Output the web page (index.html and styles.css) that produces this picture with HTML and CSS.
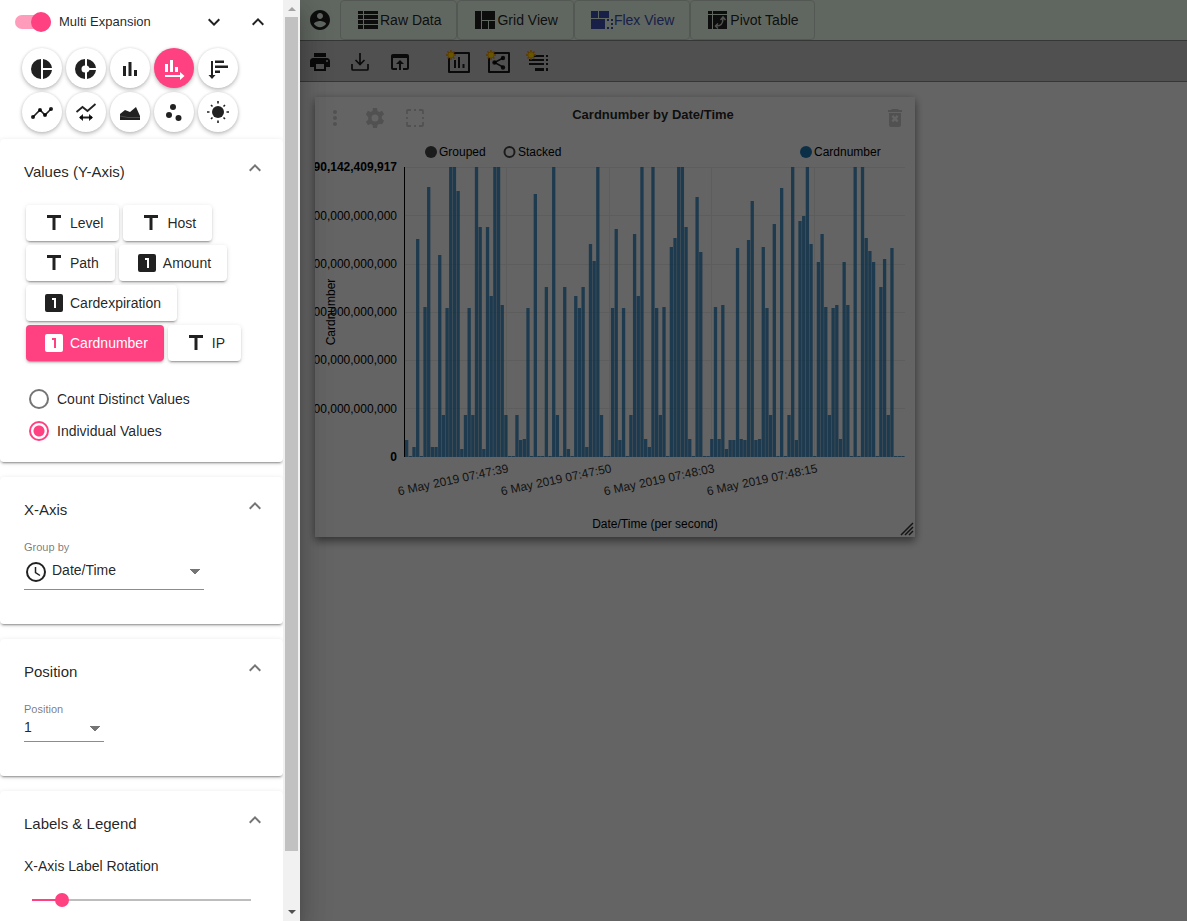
FILE: index.html
```html
<!DOCTYPE html>
<html lang="en">
<head>
<meta charset="utf-8">
<title>Flex View</title>
<link rel="stylesheet" href="styles.css">
</head>
<body>
<svg class="defs" aria-hidden="true">
  <symbol id="i-text" viewBox="0 0 24 24"><path d="M5 4v3h5.500v12h3V7H19V4z"/></symbol>
  <symbol id="i-one" viewBox="0 0 24 24"><path d="M19 3H5a2 2 0 0 0-2 2v14a2 2 0 0 0 2 2h14a2 2 0 0 0 2-2V5a2 2 0 0 0-2-2zm-5 14h-2V9h-2V7h4z"/></symbol>
  <symbol id="i-up" viewBox="0 0 24 24"><path d="M12 8l-6 6 1.410 1.410L12 10.830l4.590 4.580L18 14z"/></symbol>
  <symbol id="i-down" viewBox="0 0 24 24"><path d="M16.590 8.590L12 13.170 7.410 8.590 6 10l6 6 6-6z"/></symbol>
  <symbol id="i-spark" viewBox="0 0 10 10"><path d="M5 0v10M0 5h10M1.500 1.500l7 7M8.500 1.500l-7 7" stroke="#e08a00" stroke-width="1.400"/><circle cx="5" cy="5" r="3" fill="#ffd800" stroke="#f0a000" stroke-width=".8"/></symbol>
</svg>
<div class="layout">
  <aside class="drawer">
    <div class="drawer-content">
      <div class="topline">
        <label class="switch"><input type="checkbox" role="switch" checked><span>Multi Expansion</span></label>
        <button class="icon-btn" aria-label="Expand all"><svg class="icon"><use href="#i-down"/></svg></button>
        <button class="icon-btn" aria-label="Collapse all"><svg class="icon"><use href="#i-up"/></svg></button>
      </div>
      <div class="types">
        <button class="fab" aria-label="Pie chart"><svg class="icon" viewBox="0 0 24 24"><path d="M11 3v20a10 10 0 0 1 0-20zM13 3v9h9a10 10 0 0 0-9-9zM13 14v9a10 10 0 0 0 9-9z"/></svg></button>
        <button class="fab" aria-label="Donut chart"><svg class="icon" viewBox="0 0 24 24"><path d="M11 3v6.500a3.500 3.500 0 0 0 0 7V23a10 10 0 0 1 0-20zM13 3v6.500A3.500 3.500 0 0 1 15.500 12H22a10 10 0 0 0-9-9zM13 23v-6.500a3.500 3.500 0 0 0 2.500-2.500H22a10 10 0 0 1-9 9z"/></svg></button>
        <button class="fab" aria-label="Bar chart"><svg class="icon" viewBox="0 0 24 24"><path d="M5 10h3v10H5zM10.500 6h3v14h-3zM16 14h3v6h-3z"/></svg></button>
        <button class="fab selected" aria-label="Time bar chart"><svg class="icon" viewBox="0 0 24 24"><path d="M3 8h3v8H3zM8 4h3v12H8zM13 11h3v5h-3zM3 19h15v-3l4.500 4-4.500 4v-3H3z"/></svg></button>
        <button class="fab" aria-label="Horizontal bar chart"><svg class="icon" viewBox="0 0 24 24"><path d="M5 5h2v14h2.500L6 23l-3.500-4H5zM9 4.500h9V7H9zM9 9.500h13V12H9zM9 14.500h5V17H9z"/></svg></button>
        <button class="fab" aria-label="Line chart"><svg class="icon" viewBox="0 0 24 24"><path d="M3 17l7-7 5 5 6-6" fill="none" stroke="currentColor" stroke-width="1.600"/><circle cx="3" cy="17" r="2"/><circle cx="10" cy="10" r="2"/><circle cx="15" cy="15" r="2"/><circle cx="21" cy="9" r="2"/></svg></button>
        <button class="fab" aria-label="Time line chart"><svg class="icon" viewBox="0 0 24 24"><path d="M2.500 12l6-5 5 4 8-7M6 17.500h12" fill="none" stroke="currentColor" stroke-width="1.800"/><path d="M5 17.500l4-3.500v7zM19 17.500l-4-3.500v7z"/></svg></button>
        <button class="fab" aria-label="Area chart"><svg class="icon" viewBox="0 0 24 24"><path d="M2 20v-6l5-4 5 2 6-5 4 9v4z"/><path d="M2 16l8 1.500h12" fill="none" stroke="#666" stroke-width=".6"/></svg></button>
        <button class="fab" aria-label="Scatter chart"><svg class="icon" viewBox="0 0 24 24"><circle cx="11" cy="7" r="3"/><circle cx="7" cy="15" r="3"/><circle cx="16.500" cy="18" r="3"/></svg></button>
        <button class="fab" aria-label="Sunburst chart"><svg class="icon" viewBox="0 0 24 24"><circle cx="12" cy="12" r="6"/><path d="M12 1v2.500M12 20.500V23M1 12h2.500M20.500 12H23M5 5l1.500 1.500M17.500 17.500L19 19M19 5l-1.500 1.500M5 19l1.500-1.500" stroke="currentColor" stroke-width="1.600"/></svg></button>
      </div>

      <section class="panel">
        <header class="panel-head"><h2>Values (Y-Axis)</h2><button class="chev" aria-label="Collapse"><svg class="icon"><use href="#i-up"/></svg></button></header>
        <div class="chips">
          <button class="chip"><svg class="icon"><use href="#i-text"/></svg>Level</button>
          <button class="chip"><svg class="icon"><use href="#i-text"/></svg>Host</button>
          <button class="chip"><svg class="icon"><use href="#i-text"/></svg>Path</button>
          <button class="chip"><svg class="icon"><use href="#i-one"/></svg>Amount</button>
          <button class="chip"><svg class="icon"><use href="#i-one"/></svg>Cardexpiration</button>
          <button class="chip selected"><svg class="icon"><use href="#i-one"/></svg>Cardnumber</button>
          <button class="chip"><svg class="icon"><use href="#i-text"/></svg>IP</button>
        </div>
        <div class="radios">
          <label class="radio"><input type="radio" name="mode">Count Distinct Values</label>
          <label class="radio"><input type="radio" name="mode" checked>Individual Values</label>
        </div>
      </section>

      <section class="panel">
        <header class="panel-head"><h2>X-Axis</h2><button class="chev" aria-label="Collapse"><svg class="icon"><use href="#i-up"/></svg></button></header>
        <div class="field wide">
          <label for="group">Group by</label>
          <div class="select-row">
            <svg class="icon" viewBox="0 0 24 24"><circle cx="12" cy="12" r="9" fill="none" stroke="currentColor" stroke-width="2"/><path d="M11.500 7v5.500l4.500 3" fill="none" stroke="currentColor" stroke-width="1.500"/></svg>
            <select id="group"><option>Date/Time</option></select>
          </div>
        </div>
      </section>

      <section class="panel">
        <header class="panel-head"><h2>Position</h2><button class="chev" aria-label="Collapse"><svg class="icon"><use href="#i-up"/></svg></button></header>
        <div class="field narrow">
          <label for="pos">Position</label>
          <div class="select-row"><select id="pos"><option>1</option></select></div>
        </div>
      </section>

      <section class="panel">
        <header class="panel-head"><h2>Labels &amp; Legend</h2><button class="chev" aria-label="Collapse"><svg class="icon"><use href="#i-up"/></svg></button></header>
        <label class="slider-label" for="rot">X-Axis Label Rotation</label>
        <input class="slider" id="rot" type="range" min="0" max="100" value="11">
      </section>
    </div>
    <div class="scrollbar" aria-hidden="true"><i class="arrow up"></i><i class="thumb"></i><i class="arrow down"></i></div>
  </aside>

  <main class="app">
    <nav class="tabs">
      <button class="tool" aria-label="Account"><svg class="icon" viewBox="0 0 24 24"><path d="M12 2C6.480 2 2 6.480 2 12s4.480 10 10 10 10-4.480 10-10S17.520 2 12 2zm0 3c1.660 0 3 1.340 3 3s-1.340 3-3 3-3-1.340-3-3 1.340-3 3-3zm0 14.200c-2.500 0-4.710-1.280-6-3.220.030-1.990 4-3.080 6-3.080 1.990 0 5.970 1.090 6 3.080-1.290 1.940-3.500 3.220-6 3.220z"/></svg></button>
      <button class="tab"><svg viewBox="0 0 20 18"><path d="M0 0h5v3H0zM6 0h14v3H6zM0 4h5v4H0zM6 4h14v4H6zM0 9h5v4H0zM6 9h14v4H6zM0 14h5v4H0zM6 14h14v4H6z"/></svg>Raw Data</button>
      <button class="tab"><svg viewBox="0 0 20 18"><path d="M0 0h6v18H0zM7 0h13v9H7zM7 10h6v8H7zM14 10h6v8h-6z"/></svg>Grid View</button>
      <button class="tab active"><svg viewBox="0 0 22 18"><path d="M0 0h7v7H0zM8 0h10v7H8zM0 8h14v10H0zM16 8h2v2h-2zM20 8h2v2h-2zM20 12h2v2h-2zM16 16h2v2h-2zM20 16h2v2h-2z"/></svg>Flex View</button>
      <button class="tab"><svg viewBox="0 0 20 18"><path d="M0 0h4v3H0zM5 0h14v3H5zM0 4h4v14H0zM5 4h14v14H5z"/><path d="M8 15c5 0 7-2 7-8M12.500 9L15 6l2.500 3M10 12.500L7.500 15l2.500 2.500" fill="none" stroke="#c8d0c8" stroke-width="1.500"/></svg>Pivot Table</button>
    </nav>
    <div class="tools">
      <button class="tool" aria-label="Print"><svg class="icon" viewBox="0 0 24 24"><path d="M19 8H5c-1.660 0-3 1.340-3 3v6h4v4h12v-4h4v-6c0-1.660-1.340-3-3-3zm-3 11H8v-5h8v5zm3-7a1 1 0 1 1 0-2 1 1 0 0 1 0 2zm-1-9H6v4h12V3z"/></svg></button>
      <button class="tool" aria-label="Download"><svg class="icon" viewBox="0 0 24 24"><path d="M12 3v11M7.500 10l4.500 4.500 4.500-4.500M4 14v5a1 1 0 0 0 1 1h14a1 1 0 0 0 1-1v-5" fill="none" stroke="currentColor" stroke-width="1.700"/></svg></button>
      <button class="tool" aria-label="Open"><svg class="icon" viewBox="0 0 24 24"><path d="M19 4H5c-1.110 0-2 .9-2 2v12c0 1.100.890 2 2 2h4v-2H5V8h14v10h-4v2h4c1.100 0 2-.9 2-2V6c0-1.100-.890-2-2-2zm-7 6l-4 4h3v6h2v-6h3z"/></svg></button>
      <span class="gap"></span>
      <button class="tool" aria-label="Add chart"><svg class="icon" viewBox="0 0 24 24"><path d="M2 3h20v19H2z" fill="none" stroke="currentColor" stroke-width="2" stroke-linejoin="round"/><path d="M7 10h2v8H7zM11 7h2v11h-2zM15.500 14h2v4h-2z"/></svg><svg class="spark"><use href="#i-spark"/></svg></button>
      <button class="tool" aria-label="Add graph"><svg class="icon" viewBox="0 0 24 24"><path d="M2 3h20v19H2z" fill="none" stroke="currentColor" stroke-width="2" stroke-linejoin="round"/><path d="M16 8l-8.500 4.500L16 17" fill="none" stroke="currentColor" stroke-width="1.500"/><circle cx="16" cy="8" r="2.200"/><circle cx="7.500" cy="12.500" r="2.200"/><circle cx="16" cy="17.500" r="2.200"/></svg><svg class="spark"><use href="#i-spark"/></svg></button>
      <button class="tool" aria-label="Add list"><svg class="icon" viewBox="0 0 24 24"><path d="M5 5h12v2H5zM2 9h15v2H2zM2 13h15v2H2zM8 18h9v3H8zM19 5h2v2h-2zM19 9h2v2h-2zM19 13h2v2h-2zM19 18h2v3h-2z"/></svg><svg class="spark"><use href="#i-spark"/></svg></button>
    </div>
    <article class="card">
      <header class="card-head">
        <button class="tool" aria-label="Menu"><svg class="icon" viewBox="0 0 24 24"><circle cx="12" cy="6" r="2"/><circle cx="12" cy="12" r="2"/><circle cx="12" cy="18" r="2"/></svg></button>
        <button class="tool" aria-label="Settings"><svg class="icon" viewBox="0 0 24 24"><path fill-rule="evenodd" d="M10 2h4l.5 3 1.800 1 2.800-1.200 2 3.500-2.300 1.900v2.600l2.300 1.900-2 3.500L16.300 18l-1.800 1-.5 3h-4l-.5-3-1.800-1-2.800 1.200-2-3.500 2.300-1.900v-2.600L2.900 8.300l2-3.500L7.700 6l1.800-1zM12 8.500a3.500 3.500 0 1 0 0 7 3.500 3.500 0 0 0 0-7z"/></svg></button>
        <button class="tool" aria-label="Full screen"><svg class="icon" viewBox="0 0 24 24"><path d="M4 8V5a1 1 0 0 1 1-1h3M16 4h3a1 1 0 0 1 1 1v3M20 16v3a1 1 0 0 1-1 1h-3M8 20H5a1 1 0 0 1-1-1v-3M11 4h2M11 20h2M4 11v2M20 11v2" fill="none" stroke="currentColor" stroke-width="1.800"/></svg></button>
        <h1>Cardnumber by Date/Time</h1>
        <button class="tool" aria-label="Delete"><svg class="icon" viewBox="0 0 24 24"><path fill-rule="evenodd" d="M9 3h6l1 1h3v2H5V4h3zM6 7h12v12a2 2 0 0 1-2 2H8a2 2 0 0 1-2-2zM8.500 10.800l1.700-1.700L12 11l1.800-1.900 1.700 1.700-1.800 1.900 1.800 1.900-1.700 1.700-1.800-1.900-1.800 1.900-1.700-1.700 1.800-1.900z"/></svg></button>
      </header>
      <svg class="chart" viewBox="315 138 600 399" role="img" aria-label="Cardnumber by Date/Time">
        <g class="legend">
          <circle cx="431" cy="152" r="6" fill="#444"/><text x="439" y="156">Grouped</text>
          <circle cx="509.500" cy="152" r="5" fill="none" stroke="#444" stroke-width="2"/><text x="518" y="156">Stacked</text>
          <circle cx="806" cy="152" r="6" fill="#1f77b4"/><text x="814" y="156">Cardnumber</text>
        </g>
        <path class="grid" d="M405 167.500h500M405 215.500h500M405 264.500h500M405 312.500h500M405 360.500h500M405 408.500h500M506.500 167v290M609.500 167v290M711.500 167v290M814.500 167v290"/>
        <g id="bars" class="bars"></g>
        <path class="axis" d="M404.500 167v290"/>
        <g class="ylabels">
          <text x="397" y="171" class="strong">5,990,142,409,917</text>
          <text x="397" y="220">5,000,000,000,000</text>
          <text x="397" y="268">4,000,000,000,000</text>
          <text x="397" y="316">3,000,000,000,000</text>
          <text x="397" y="364">2,000,000,000,000</text>
          <text x="397" y="413">1,000,000,000,000</text>
          <text x="397" y="461" class="strong">0</text>
        </g>
        <g class="xlabels">
          <text transform="translate(509 472) rotate(-12)">6 May 2019 07:47:39</text>
          <text transform="translate(612 472) rotate(-12)">6 May 2019 07:47:50</text>
          <text transform="translate(715 472) rotate(-12)">6 May 2019 07:48:03</text>
          <text transform="translate(818 472) rotate(-12)">6 May 2019 07:48:15</text>
        </g>
        <text class="mid" transform="translate(335 312) rotate(-90)">Cardnumber</text>
        <text class="mid" x="655" y="528">Date/Time (per second)</text>
        <path d="M901 535l12-12M905 535l8-8M909 535l4-4" stroke="#333" stroke-width="1.500"/>
      </svg>
    </article>
    <div class="backdrop"></div>
  </main>
</div>
<script src="chart.js"></script>
</body>
</html>
```
FILE: styles.css
```css
* { box-sizing: border-box; }
body { margin: 0; background: #fafafa; color: rgba(0,0,0,.87); font: 14px/20px "Liberation Sans", Arial, sans-serif; }
button { font: inherit; color: inherit; border: 0; padding: 0; background: none; cursor: pointer; }
h1, h2 { margin: 0; font-weight: normal; }
.defs { display: none; }
.icon { width: 24px; height: 24px; fill: currentColor; flex: none; display: block; }
.layout { display: grid; grid-template-columns: 300px 1fr; height: 100vh; overflow: hidden; }

.drawer { position: relative; z-index: 2; display: grid; grid-template-columns: 1fr 17px; min-height: 0; background: #fff; box-shadow: 0 8px 10px -5px rgba(0,0,0,.2), 0 16px 24px 2px rgba(0,0,0,.14), 0 6px 30px 5px rgba(0,0,0,.12); }
.drawer-content { overflow: hidden; min-height: 0; }
.topline { display: flex; align-items: center; height: 44px; padding: 0 5px 0 15px; }
.switch { display: flex; align-items: center; gap: 8px; flex: 1; font-size: 13px; }
.switch input { appearance: none; position: relative; width: 36px; height: 14px; margin: 0; border-radius: 7px; background: #ff9bbb; }
.switch input::after { content: ""; position: absolute; right: 0; top: -3px; width: 20px; height: 20px; border-radius: 50%; background: #ff4081; }
.icon-btn { width: 24px; height: 24px; margin-right: 20px; }
.icon-btn:last-child { margin-right: 8px; }
.types { display: grid; grid-template-columns: repeat(5, 40px); gap: 4px; padding: 4px 22px 7px; }
.fab { width: 40px; height: 40px; border-radius: 50%; display: grid; place-items: center; background: #fff; box-shadow: 0 2px 4px rgba(0,0,0,.24), 0 0 3px rgba(0,0,0,.1); }
.fab.selected, .chip.selected { background: #ff4081; color: #fff; }

.panel { padding: 22px 24px 0; margin-bottom: 15px; border-radius: 4px; background: #fff; box-shadow: 0 3px 1px -2px rgba(0,0,0,.2), 0 2px 2px rgba(0,0,0,.14), 0 1px 5px rgba(0,0,0,.12); }
.panel:last-child { padding-bottom: 40px; }
.panel-head { display: flex; justify-content: space-between; height: 44px; }
.panel-head h2 { font-size: 15px; line-height: 22px; }
.chev { width: 24px; height: 24px; margin: -5px -8px 0 0; color: #757575; }
.chips { display: flex; flex-wrap: wrap; gap: 4px; padding-left: 2px; }
.chip { display: flex; align-items: center; gap: 4px; height: 36px; padding: 0 16px; border-radius: 4px; background: #fff; box-shadow: 0 3px 1px -2px rgba(0,0,0,.2), 0 2px 2px rgba(0,0,0,.14), 0 1px 5px rgba(0,0,0,.12); }
.radios { padding: 22px 0 15px 5px; }
.radio { display: flex; align-items: center; gap: 8px; height: 32px; }
.radio input { appearance: none; width: 20px; height: 20px; margin: 0; border: 2px solid #757575; border-radius: 50%; }
.radio input:checked { border-color: #ff4081; background: radial-gradient(circle, #ff4081 5px, transparent 6px); }
.field { padding-bottom: 34px; }
.field.wide { width: 180px; }
.field.narrow { width: 80px; }
.field label { display: block; margin-top: -3px; font-size: 11px; line-height: 14px; color: rgba(0,0,0,.54); }
.select-row { display: flex; align-items: center; height: 36px; border-bottom: 1px solid #8c8c8c; }
.wide .select-row { gap: 4px; }
.narrow .select-row { height: 26px; }
select { appearance: none; flex: 1; min-width: 0; height: 24px; border: 0; padding: 0 0 4px; font: inherit; color: inherit; background: linear-gradient(to bottom right, #757575 50%, transparent 51%) right 4px top 9px / 5px 5px no-repeat, linear-gradient(to bottom left, #757575 50%, transparent 51%) right 9px top 9px / 5px 5px no-repeat; }
.slider-label { display: block; margin-top: -1px; }
.slider { appearance: none; display: block; width: calc(100% - 16px); height: 14px; margin: 17px 8px 24px; background: linear-gradient(to right, #ff4081 29px, #bdbdbd 29px) center / 100% 2px no-repeat; }
.slider::-webkit-slider-thumb { appearance: none; width: 14px; height: 14px; border-radius: 50%; background: #ff4081; }
.scrollbar { display: grid; grid-template-rows: 17px 1fr 70px; background: #f1f1f1; }
.thumb { margin: 0 2px; background: #c1c1c1; }
.arrow { justify-self: center; align-self: center; border: 4px solid transparent; }
.arrow.up { border-top: 0; border-bottom-color: #a3a3a3; }
.arrow.down { align-self: end; margin-bottom: 7px; border-bottom: 0; border-top-color: #505050; }

.app { position: relative; min-width: 0; }
.backdrop { position: absolute; inset: 0; background: rgba(0,0,0,.6); }
.tabs { display: flex; height: 41px; background: #f0fff0; border-bottom: 1px solid #888; }
.tool { position: relative; width: 40px; height: 40px; display: grid; place-items: center; }
.tab { display: flex; align-items: center; height: 40px; padding: 0 15px 0 17px; border: 1px solid #d2dcd2; border-radius: 4px; }
.tab svg { height: 18px; fill: currentColor; margin-right: 2px; }
.tab.active { color: #3f51b5; padding: 0 15px 0 16px; }
.tab.active svg { margin-right: 1px; }
.tools { display: flex; height: 41px; padding-top: 1px; background: #c8c8c8; border-bottom: 1px solid #888; }
.tools .gap { width: 19px; }
.spark { position: absolute; left: 7px; top: 8px; width: 10px; height: 10px; }
.card { width: 600px; max-width: calc(100% - 30px); margin: 15px; background: #fafafa; box-shadow: 0 5px 8px rgba(0,0,0,.35), 0 1px 8px rgba(0,0,0,.2); }
.card-head { display: flex; height: 41px; padding-top: 1px; }
.card-head .tool { color: #cacaca; }
.card-head h1 { flex: 1; padding-right: 4px; text-align: center; font-size: 13px; font-weight: bold; line-height: 34px; }
.chart { display: block; width: 100%; font-size: 12px; }
.chart text { fill: #000; }
.chart .xlabels text { fill: #333; }
.strong { font-weight: bold; }
.ylabels, .xlabels { text-anchor: end; }
.mid { text-anchor: middle; }
.grid { stroke: #e8e8e8; }
.axis { stroke: #000; }
.bars { fill: #1f77b4; fill-opacity: .8; }
```
FILE: chart.js
```js
const FULL = 290;
const BASE = 457;
const LEFT = 405;
const PITCH = 500 / 136;
const heights = [
  17,1,10,218,1,150,270,10,10,202,42,149,FULL,FULL,266,8,42,149,42,FULL,
  230,8,230,161,FULL,FULL,152,42,1,1,42,17,18,149,1,263,1,1,170,1,
  FULL,42,1,170,8,1,161,149,170,10,213,196,FULL,42,1,1,149,228,17,149,
  1,42,223,161,FULL,18,10,FULL,149,42,150,1,210,219,FULL,FULL,230,18,1,260,
  205,1,1,18,150,18,152,8,17,17,209,18,17,217,256,17,18,210,149,42,
  233,1,269,1,42,FULL,17,236,241,FULL,213,1,195,223,150,42,149,152,18,195,
  152,1,FULL,1,FULL,219,206,195,1,170,198,42,209,1,1,1
];
const bars = document.getElementById("bars");
heights.forEach((h, i) => {
  const rect = document.createElementNS("http://www.w3.org/2000/svg", "rect");
  rect.setAttribute("x", LEFT + i * PITCH);
  rect.setAttribute("y", BASE - h);
  rect.setAttribute("width", PITCH * 0.9);
  rect.setAttribute("height", h);
  bars.appendChild(rect);
});
```
